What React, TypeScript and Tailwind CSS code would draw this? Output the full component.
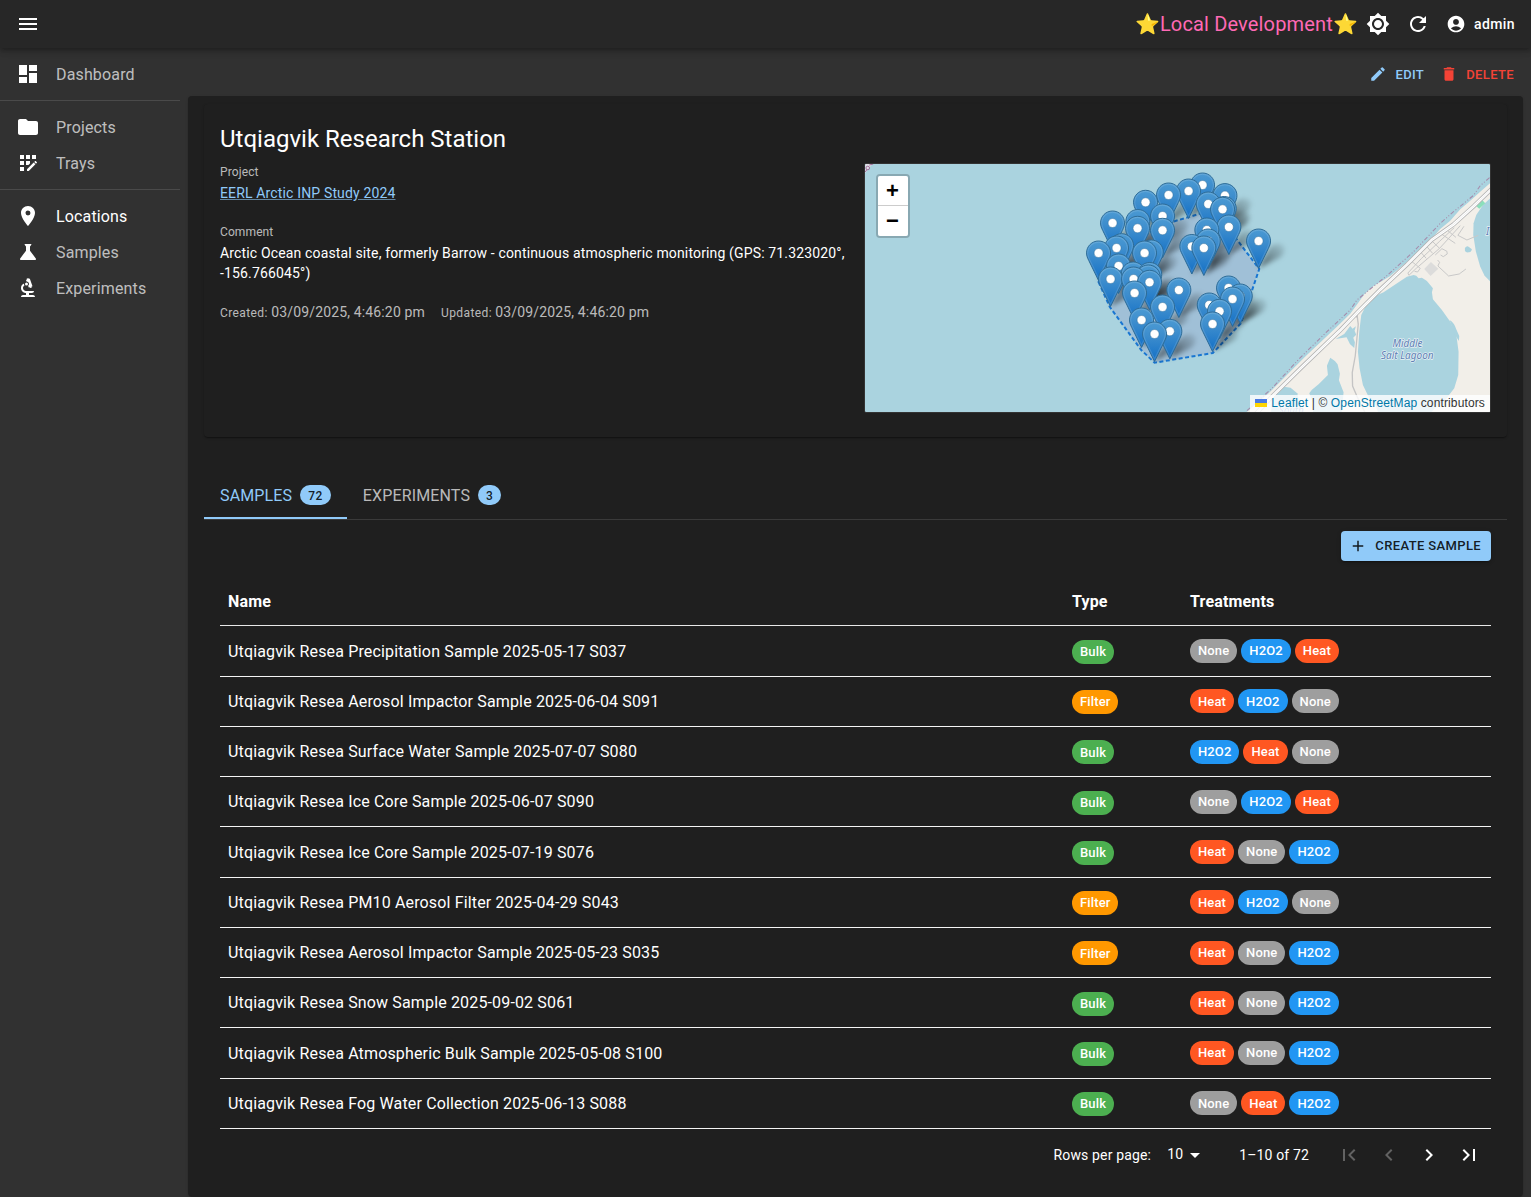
import React from "react";
import {
  MdMenu, MdDashboard, MdFolder, MdAppRegistration, MdLocationOn, MdScience, MdBiotech,
  MdRefresh, MdAccountCircle, MdEdit, MdDelete, MdAdd, MdArrowDropDown,
  MdFirstPage, MdChevronLeft, MdChevronRight, MdLastPage,
} from "react-icons/md";
import type { IconType } from "react-icons";

type Kind = "Bulk" | "Filter";
type Treatment = "None" | "H2O2" | "Heat";
type Sample = { name: string; type: Kind; treatments: Treatment[] };

const samples: Sample[] = [
  { name: "Utqiagvik Resea Precipitation Sample 2025-05-17 S037", type: "Bulk", treatments: ["None", "H2O2", "Heat"] },
  { name: "Utqiagvik Resea Aerosol Impactor Sample 2025-06-04 S091", type: "Filter", treatments: ["Heat", "H2O2", "None"] },
  { name: "Utqiagvik Resea Surface Water Sample 2025-07-07 S080", type: "Bulk", treatments: ["H2O2", "Heat", "None"] },
  { name: "Utqiagvik Resea Ice Core Sample 2025-06-07 S090", type: "Bulk", treatments: ["None", "H2O2", "Heat"] },
  { name: "Utqiagvik Resea Ice Core Sample 2025-07-19 S076", type: "Bulk", treatments: ["Heat", "None", "H2O2"] },
  { name: "Utqiagvik Resea PM10 Aerosol Filter 2025-04-29 S043", type: "Filter", treatments: ["Heat", "H2O2", "None"] },
  { name: "Utqiagvik Resea Aerosol Impactor Sample 2025-05-23 S035", type: "Filter", treatments: ["Heat", "None", "H2O2"] },
  { name: "Utqiagvik Resea Snow Sample 2025-09-02 S061", type: "Bulk", treatments: ["Heat", "None", "H2O2"] },
  { name: "Utqiagvik Resea Atmospheric Bulk Sample 2025-05-08 S100", type: "Bulk", treatments: ["Heat", "None", "H2O2"] },
  { name: "Utqiagvik Resea Fog Water Collection 2025-06-13 S088", type: "Bulk", treatments: ["None", "Heat", "H2O2"] },
];

const chipColour: Record<Kind | Treatment, string> = {
  Bulk: "bg-[#4caf50]",
  Filter: "bg-[#ff9800]",
  None: "bg-[#9e9e9e]",
  H2O2: "bg-[#2196f3]",
  Heat: "bg-[#ff5722]",
};

function Chip({ label }: { label: Kind | Treatment }) {
  return (
    <span className={`inline-flex h-6 items-center rounded-full px-2 text-[13px] font-medium tracking-[0.13px] text-white ${chipColour[label]}`}>
      {label}
    </span>
  );
}

function SunIcon({ className }: { className?: string }) {
  return (
    <svg viewBox="0 0 24 24" fill="currentColor" className={className}>
      <path d="M20 8.69V4h-4.690L12 .690 8.690 4H4v4.690L.690 12 4 15.310V20h4.690L12 23.310 15.310 20H20v-4.690L23.310 12 20 8.690zM12 18c-3.310 0-6-2.690-6-6s2.690-6 6-6 6 2.690 6 6-2.690 6-6 6zm0-10c-2.210 0-4 1.790-4 4s1.790 4 4 4 4-1.790 4-4-1.790-4-4-4z" />
    </svg>
  );
}

function NavItem({ icon: Icon, label, active }: { icon: IconType; label: string; active?: boolean }) {
  return (
    <a className={`flex h-9 items-center gap-4 px-4 text-base leading-6 tracking-[0.15px] ${active ? "text-white" : "text-white/70"}`}>
      <Icon className="size-6 text-white" />
      <span className="pt-0.5">{label}</span>
    </a>
  );
}

/* Centre of each pin head, in map pixels, ordered north to south. */
const pins: [number, number][] = [
  [337.3, 21], [323.3, 27], [303.3, 31], [359.7, 31.6], [280.3, 38.3], [343, 40], [359, 44.5], [357.3, 45.3],
  [297.3, 52], [272.6, 57.5], [247.3, 59], [363.6, 63], [272.3, 64.3], [297.3, 66.3], [341.6, 66], [343, 77],
  [393.3, 77], [256.3, 81.7], [326.6, 82.5], [251.3, 84], [338.6, 84], [286, 88], [233.3, 89], [279.3, 89],
  [253.3, 102], [268, 110], [284.5, 110.5], [283, 113], [245.3, 115], [268.3, 115], [284.3, 118.3], [363.3, 124],
  [313.6, 126], [269.3, 129], [375, 132], [367.3, 135], [344, 141], [297.3, 143], [354.3, 147.3], [276.3, 156],
  [347.3, 160], [304.6, 167.3], [289.3, 170],
];

function SiteMap() {
  return (
    <svg viewBox="0 0 625 248" className="block h-full w-full bg-[#aad3df]" aria-label="Station map">
      <defs>
        <linearGradient id="pin" x1="0" y1="0" x2="0" y2="1">
          <stop offset="0" stopColor="#4b9ad3" />
          <stop offset="0.35" stopColor="#3d8dcd" />
          <stop offset="1" stopColor="#126fc6" />
        </linearGradient>
        <filter id="soft" x="-50%" y="-50%" width="200%" height="200%">
          <feGaussianBlur stdDeviation="2.6" />
        </filter>
        <linearGradient id="shade" x1="0" y1="1" x2="1" y2="0">
          <stop offset="0" stopOpacity="0.6" />
          <stop offset="0.5" stopOpacity="0.3" />
          <stop offset="1" stopOpacity="0.05" />
        </linearGradient>
        <g id="marker">
          <path d="M12.5 0.5C5.8 .5.5 5.9.5 12.4c0 3 1 5.2 2.2 7.6L12.5 40l9.8-20c1.200-2.400 2.200-4.600 2.200-7.600C24.500 5.900 19.200.500 12.500.500Z" fill="url(#pin)" stroke="#2e6c97" strokeWidth="1" />
          <path d="M12.500 1.600C6.400 1.600 1.600 6.400 1.600 12.400c0 2.800.9 4.800 2.100 7.100l8.800 18.100 8.800-18.100c1.200-2.300 2.100-4.300 2.100-7.100C23.400 6.400 18.600 1.600 12.500 1.600Z" fill="none" stroke="#fff" strokeOpacity="0.13" strokeWidth="1.100" />
          <circle cx="12.500" cy="12.500" r="4.500" fill="#fff" stroke="#2e6c97" strokeOpacity="0.6" strokeWidth="0.800" />
        </g>
      </defs>

      <g transform="translate(375 -9) scale(0.33333)">
        <path fill="#f2efe9" d="M15 775 L85 715 160 640 200 600 290 515 330 476 352 446 372 418 400 393 450 363 510 313 570 256 600 222 630 197 660 163 690 137 720 110 755 80V775Z" />
        <g fill="#aad3df">
          <path d="M520 360L500 365 475 382 430 412 400 425 378 450 363 480 357 530 353 590 358 640 368 690 385 725 405 750 415 775H570L582 762 615 735 642 700 654 660 655 590 649 545 630 500 605 465 578 433 575 412 578 400 560 378 545 368 535 370 528 362Z" />
          <path d="M755 125L728 150 708 180 700 205 699 240 707 290 720 335 733 362 755 385Z" />
          <path d="M674 279q6-8 12-3l9 7q-2 10-10 9-9 1-11-5Z" />
          <path d="M628 495q14 8 20 28l9 20-1 15-14-22Z" />
          <path d="M330 513l7 8 10-7-4 13 5 12-9 9 5 14-2 17-13-12-10-20-33 5 26-15Z" />
          <path d="M270 608l14 10 8 10 7 28-3 20 14 36-6 60H218l2-25-13-32 8-11 20-16 28-28-3-28Z" />
          <path d="M92 775l5-45 18-28 16-7 20 3 20 17 15 60Z" />
        </g>
        <path fill="#dcdcdb" d="M552 342L572 321 594 341 571 363Z" />
        <path fill="#8bdfbb" d="M705 151L725 134 735 145 717 161Z" />
        <g fill="none" stroke="#c8c8c8" strokeWidth="3" strokeLinejoin="round">
          <path d="M575 258l23 22 62-68M598 280l-70 60-22 21-3-7 40-43 54-51 45-42M605 238l40 27M620 225l27 22M540 290l18 20M560 275l17 20M515 320l14 11 11 9-8 11-9-2M585 300l20-19 15 8 1 8-12 8-8-5M671 214l-18 27 27 14 34-14M592 315l6 7-5 11 32 30 32-6 20-15" />
        </g>
        <path d="M350 476l4 32-9 95-9 50 1 40 15 35 25 50" fill="none" stroke="#c4c4c4" strokeWidth="4" />
        <path d="M348 478l2 10" stroke="#bbb" strokeWidth="3" />
        <path d="M48 775L100 720 180 641 300 526 350 474 420 404 500 329 575 254 640 208 700 154 758 98" fill="none" stroke="#b5b5b5" strokeWidth="13" />
        <path d="M48 775L100 720 180 641 300 526 350 474 420 404 500 329 575 254 640 208 700 154 758 98" fill="none" stroke="#fff" strokeWidth="8" />
        <path d="M48 775L100 720 180 641 300 526 350 474 420 404 500 329 575 254 640 208 700 154 758 98" fill="none" stroke="#ddd" strokeWidth="1.500" />
        <path d="M20 767L95 700 180 608 260 530 330 465 350 435 390 402 440 362 520 290 600 205 640 170 700 121 720 92 755 62" fill="none" stroke="#a58bab" strokeWidth="3.200" strokeDasharray="13 6 3 6 3 6" />
        <g fontFamily="'Noto Sans', sans-serif" fontStyle="italic" fontSize="30" fill="#5d80b4" stroke="#e8f1f5" strokeWidth="4" paintOrder="stroke" strokeLinejoin="round" textAnchor="middle">
          <text x="502" y="577" textLength="90">Middle</text>
          <text x="501" y="612" textLength="158">Salt Lagoon</text>
          <text x="737" y="240" textAnchor="start">I</text>
          <text x="153" y="776" textLength="75">South</text>
        </g>
      </g>
      <g fill="none" stroke="#a06f9c">
        <path d="M0 0h7L0 9Z" fill="#e0dfe6" stroke="none" />
        <circle cx="2.500" cy="4" r="1.800" />
        <path d="M4 1l4-1M0 8l2-3" />
      </g>

      <path
        d="M233.300 118L244.600 143 276 186 289.300 198.700 347.600 189 375.600 159.300 394 105 359 59 337.300 49 303.300 59 247.300 87Z"
        fill="#7a76b8" fillOpacity="0.200" stroke="#1976d2" strokeWidth="2" strokeDasharray="4 2.500"
      />
      <g>
        {pins.map(([x, y], i) => (
          <path key={i} d="M0 0L9-17Q14-26 22-24Q30-20 22-11Z" transform={`translate(${x} ${y + 27})`} fill="url(#shade)" filter="url(#soft)" />
        ))}
      </g>
      <g>
        {pins.map(([x, y], i) => <use key={i} href="#marker" x={x - 12.5} y={y - 12.5} />)}
      </g>
    </svg>
  );
}

function TopBar() {
  return (
    <header className="relative z-10 flex h-12 shrink-0 items-center bg-[#272727] pl-4 pr-4 shadow-[0_2px_4px_-1px_rgba(0,0,0,0.2),0_4px_5px_0_rgba(0,0,0,0.14),0_1px_10px_0_rgba(0,0,0,0.12)]">
      <MdMenu className="size-6" />
      <div className="ml-auto flex items-center">
        <span className="text-xl leading-8 tracking-[0.15px] text-[#ff69b4]">⭐Local Development⭐</span>
        <SunIcon className="ml-2 size-6" />
        <MdRefresh className="ml-4 size-6" />
        <MdAccountCircle className="ml-4 size-5" />
        <span className="ml-2 text-sm font-medium tracking-[0.4px]">admin</span>
      </div>
    </header>
  );
}

function Sidebar() {
  return (
    <nav className="w-[180px] shrink-0 pt-2">
      <NavItem icon={MdDashboard} label="Dashboard" />
      <hr className="my-2 border-white/12" />
      <NavItem icon={MdFolder} label="Projects" />
      <NavItem icon={MdAppRegistration} label="Trays" />
      <hr className="my-2 border-white/12" />
      <NavItem icon={MdLocationOn} label="Locations" active />
      <NavItem icon={MdScience} label="Samples" />
      <NavItem icon={MdBiotech} label="Experiments" />
    </nav>
  );
}

function StationCard() {
  return (
    <section className="mt-2 h-[333px] rounded bg-[#1f1f1f] px-4 pt-[18px] shadow-[0_2px_1px_-1px_rgba(0,0,0,0.2),0_1px_1px_0_rgba(0,0,0,0.14),0_1px_3px_0_rgba(0,0,0,0.12)]">
      <h1 className="h-[41px] text-2xl leading-[34px]">Utqiagvik Research Station</h1>
      <div className="grid grid-cols-2 gap-4">
        <div>
          <p className="pt-px text-xs leading-4 tracking-[0.11px] text-white/70">Project</p>
          <a className="mt-[3px] block text-sm leading-5 tracking-[0.15px] text-[#90caf9] underline decoration-[#90caf9]/60">EERL Arctic INP Study 2024</a>
          <p className="mt-[21px] text-xs leading-4 tracking-[0.11px] text-white/70">Comment</p>
          <p className="mt-[3px] text-sm leading-5 tracking-[0.15px]">
            Arctic Ocean coastal site, formerly Barrow - continuous atmospheric monitoring (GPS: 71.323020°, -156.766045°)
          </p>
          <div className="mt-[19px] flex gap-4 text-sm leading-5 tracking-[0.15px] text-white/70">
            <span><span className="text-xs tracking-[0.4px]">Created: </span>03/09/2025, 4:46:20 pm</span>
            <span><span className="text-xs tracking-[0.4px]">Updated: </span>03/09/2025, 4:46:20 pm</span>
          </div>
        </div>
        <div className="relative h-[250px] overflow-hidden rounded-xs border border-[#333]">
          <SiteMap />
          <div className="absolute left-[11px] top-2.5 flex w-[34px] flex-col rounded border-2 border-black/20 bg-clip-padding font-['Liberation_Sans',sans-serif] text-black">
            <button className="flex h-[30px] items-center justify-center rounded-t-xs border-b border-[#ccc] bg-white text-[22px] font-bold leading-none">+</button>
            <button className="flex h-[30px] items-center justify-center rounded-b-xs bg-white text-[22px] font-bold leading-none">−</button>
          </div>
          <div className="absolute bottom-0 right-0 flex h-[17px] items-center bg-white/80 px-[5px] pb-0.5 font-['Liberation_Sans',sans-serif] text-xs tracking-[0.13px] text-[#333]">
            <svg viewBox="0 0 12 8" className="mt-px mr-1 h-2 w-3"><path fill="#4c7be1" d="M0 0h12v4H0z" /><path fill="#ffd500" d="M0 4h12v4H0z" /></svg>
            <span className="whitespace-pre"><span className="text-[#0078a8]">Leaflet</span> | © <span className="text-[#0078a8]">OpenStreetMap</span> contributors</span>
          </div>
        </div>
      </div>
    </section>
  );
}

function Tab({ label, count, active }: { label: string; count: number; active?: boolean }) {
  return (
    <div className={`flex h-12 items-center gap-2 border-b-2 px-4 pt-0.5 text-base tracking-[0.15px] uppercase ${active ? "border-[#90caf9] text-[#90caf9]" : "border-transparent text-white/70"}`}>
      <span className="pt-0.5">{label}</span>
      <span className="flex h-5 items-center rounded-full bg-[#90caf9] px-2 pt-px text-xs font-medium tracking-[0.4px] text-black/87">{count}</span>
    </div>
  );
}

function SamplesTable() {
  return (
    <table className="mt-4 w-full table-fixed border-collapse text-left text-base tracking-[0.15px]">
      <colgroup>
        <col className="w-[844px]" />
        <col className="w-[118px]" />
        <col />
      </colgroup>
      <thead>
        <tr className="h-[48.8px] border-b border-[#e8e8e8]">
          <th className="px-2 pt-[1.5px] font-bold">Name</th>
          <th className="px-2 pt-[1.5px] font-bold">Type</th>
          <th className="px-2 pt-[1.5px] font-bold">Treatments</th>
        </tr>
      </thead>
      <tbody>
        {samples.map((s) => (
          <tr key={s.name} className="h-[50.25px] border-b border-[#f4f4f4]">
            <td className="px-2 pt-[1.5px] pb-0">{s.name}</td>
            <td className="px-2 py-0"><div className="flex pt-[1.8px]"><Chip label={s.type} /></div></td>
            <td className="px-2 py-0"><div className="flex gap-1 pt-[0.4px]">{s.treatments.map((t) => <Chip key={t} label={t} />)}</div></td>
          </tr>
        ))}
      </tbody>
    </table>
  );
}

function Pagination() {
  return (
    <div className="flex h-[52px] items-center justify-end pr-0.5 text-sm tracking-[0.15px]">
      <span>Rows per page:</span>
      <span className="ml-4 -mt-0.5">10</span>
      <MdArrowDropDown className="size-6" />
      <span className="ml-8">1–10 of 72</span>
      <div className="ml-5 flex">
        <span className="p-2 text-white/30"><MdFirstPage className="size-6" /></span>
        <span className="p-2 text-white/30"><MdChevronLeft className="size-6" /></span>
        <span className="p-2"><MdChevronRight className="size-6" /></span>
        <span className="p-2"><MdLastPage className="size-6" /></span>
      </div>
    </div>
  );
}

export default function App() {
  return (
    <div className="flex h-[1197px] w-[1531px] flex-col overflow-hidden bg-[#313131] font-[Roboto,sans-serif] text-white antialiased">
      <TopBar />
      <div className="flex grow">
        <Sidebar />
        <main className="flex grow flex-col px-2">
          <div className="flex h-12 items-center justify-end gap-4 pt-1 pr-[9px] text-[13px] font-medium tracking-[0.371px] uppercase">
            <span className="flex items-center gap-2 text-[#90caf9]"><MdEdit className="size-[18px]" /><span className="pt-px">Edit</span></span>
            <span className="flex items-center gap-2 text-[#f44336]"><MdDelete className="size-[18px]" /><span className="pt-px">Delete</span></span>
          </div>
          <div className="h-[1100px] rounded bg-[#1f1f1f] px-4 shadow-[0_2px_1px_-1px_rgba(0,0,0,0.2),0_1px_1px_0_rgba(0,0,0,0.14),0_1px_3px_0_rgba(0,0,0,0.12)]">
            <StationCard />
            <div className="mt-[34px] flex h-[49px] border-b border-white/12">
              <Tab label="Samples" count={72} active />
              <Tab label="Experiments" count={3} />
            </div>
            <div className="px-4 pt-[11px]">
              <div className="flex justify-end">
                <button className="flex h-[30px] items-center gap-2 rounded bg-[#90caf9] pr-2.5 pl-2 text-[13px] font-medium tracking-[0.371px] text-black/87 uppercase shadow-[0_3px_1px_-2px_rgba(0,0,0,0.2),0_2px_2px_0_rgba(0,0,0,0.14),0_1px_5px_0_rgba(0,0,0,0.12)]">
                  <MdAdd className="size-[18px]" />Create Sample
                </button>
              </div>
              <SamplesTable />
              <Pagination />
            </div>
          </div>
        </main>
      </div>
    </div>
  );
}
